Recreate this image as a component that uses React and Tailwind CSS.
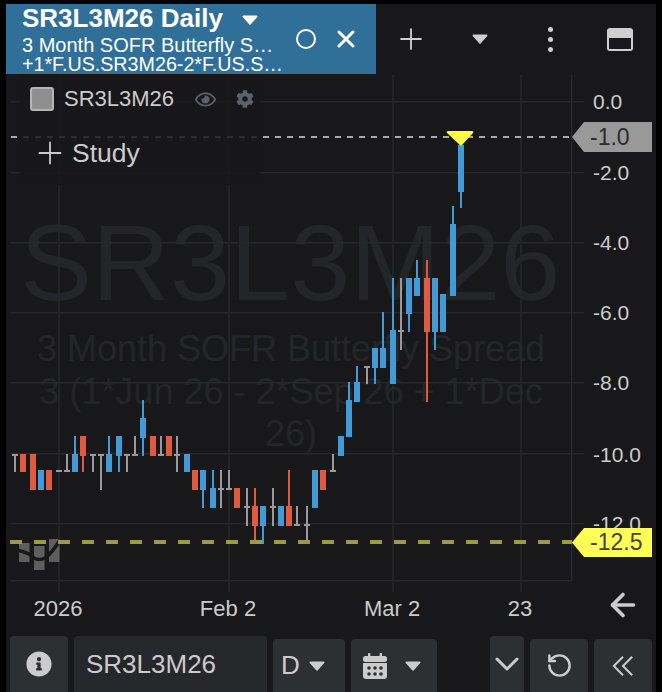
import React from "react";
import { ArrowLeft, ChevronDown, Plus, RotateCcw, X } from "lucide-react";
import { FaCog, FaInfoCircle, FaRegEye } from "react-icons/fa";

const BLUE = "#429ad6";
const RED = "#e05a3f";
const GREY = "#9a9a9a";

// x, wick top, wick bottom, body top, body bottom, color. Flat candles use a 2px body.
const candles = [
  [15, 454, 472, 454, 456, GREY],
  [23, 454, 472, 454, 472, RED],
  [33, 454, 490, 454, 490, RED],
  [41, 470, 490, 470, 490, BLUE],
  [49, 470, 490, 470, 490, RED],
  [59, 470, 472, 470, 472, GREY],
  [67, 454, 472, 470, 472, GREY],
  [75, 436, 472, 454, 472, BLUE],
  [83, 436, 472, 436, 456, RED],
  [93, 454, 472, 454, 456, GREY],
  [101, 454, 490, 454, 456, GREY],
  [109, 436, 472, 454, 472, BLUE],
  [119, 436, 472, 436, 456, BLUE],
  [127, 454, 472, 454, 456, GREY],
  [135, 436, 456, 454, 456, GREY],
  [143, 400, 456, 418, 438, BLUE],
  [153, 436, 456, 436, 456, RED],
  [161, 436, 456, 454, 456, GREY],
  [169, 436, 456, 436, 456, RED],
  [177, 436, 472, 454, 456, GREY],
  [187, 454, 472, 454, 472, BLUE],
  [195, 470, 490, 470, 490, RED],
  [203, 470, 508, 470, 490, BLUE],
  [213, 470, 508, 488, 508, BLUE],
  [221, 470, 508, 488, 490, GREY],
  [229, 470, 490, 488, 490, GREY],
  [237, 488, 508, 488, 508, RED],
  [247, 488, 526, 506, 508, GREY],
  [255, 488, 544, 506, 526, RED],
  [263, 506, 544, 506, 526, BLUE],
  [273, 488, 526, 506, 508, GREY],
  [281, 506, 526, 506, 526, BLUE],
  [289, 470, 526, 506, 526, RED],
  [297, 506, 526, 524, 526, GREY],
  [307, 506, 544, 524, 526, GREY],
  [315, 470, 508, 470, 508, BLUE],
  [323, 470, 490, 470, 490, RED],
  [333, 454, 472, 470, 472, GREY],
  [341, 436, 456, 436, 456, BLUE],
  [349, 382, 437, 400, 437, BLUE],
  [357, 366, 402, 382, 402, BLUE],
  [367, 366, 384, 366, 368, GREY],
  [375, 348, 384, 348, 368, BLUE],
  [383, 312, 368, 348, 368, BLUE],
  [393, 278, 384, 330, 384, BLUE],
  [401, 278, 350, 330, 332, GREY],
  [409, 278, 332, 278, 314, BLUE],
  [417, 260, 296, 278, 296, BLUE],
  [427, 260, 402, 278, 332, RED],
  [435, 278, 350, 278, 332, BLUE],
  [443, 294, 332, 294, 332, BLUE],
  [453, 206, 296, 224, 296, BLUE],
  [461, 145, 208, 145, 192, BLUE],
];

const gridY = [102, 173, 243, 313, 383, 454, 524];
const gridX = [59, 229, 393, 521];

const priceLabels = [
  ["0.0", 102, 593],
  ["-2.0", 173, 593],
  ["-4.0", 243, 593],
  ["-6.0", 313, 593],
  ["-8.0", 383, 593],
  ["-10.0", 455, 593],
  ["-12.0", 524, 593],
];

const dateLabels = [
  ["2026", 58],
  ["Feb 2", 228],
  ["Mar 2", 392],
  ["23", 520],
];

const Caret = ({ className }) => (
  <svg viewBox="0 0 16 10" className={className} fill="currentColor">
    <path d="M1.5 0.5h13a1 1 0 0 1 .8 1.6L8.8 9.2a1 1 0 0 1-1.6 0L.7 2.1A1 1 0 0 1 1.5.5z" />
  </svg>
);

const CalendarIcon = () => (
  <svg viewBox="0 0 24 26" className="h-[26px] w-[24px]" fill="currentColor">
    <rect x="5" y="0" width="2.4" height="5" rx="1" />
    <rect x="16.6" y="0" width="2.4" height="5" rx="1" />
    <rect x="0" y="3" width="24" height="6" rx="2.5" />
    <path d="M0 10h24v13a3 3 0 0 1-3 3H3a3 3 0 0 1-3-3z" />
    <g fill="#2e2f33">
      <circle cx="6" cy="15" r="1.8" />
      <circle cx="12" cy="15" r="1.8" />
      <circle cx="18" cy="15" r="1.8" />
      <circle cx="6" cy="21" r="1.8" />
      <circle cx="12" cy="21" r="1.8" />
      <circle cx="18" cy="21" r="1.8" />
    </g>
  </svg>
);

const Chart = () => (
  <svg viewBox="6 74 650 522" className="absolute inset-0 h-full w-full">
    {gridY.map((y) => (
      <rect key={y} x="11" y={y - 1} width="573" height="1.5" fill="#26272a" />
    ))}
    {gridX.map((x) => (
      <rect key={x} x={x - 0.75} y="75" width="1.5" height="517" fill="#26272a" />
    ))}
    <rect x="571" y="75" width="1.5" height="506" fill="#26272a" />
    <rect x="10" y="580" width="562" height="1.5" fill="#26272a" />

    {/* logo watermark */}
    <g fill="#5e5e5e">
      <rect x="19" y="543" width="10.5" height="19" />
      <rect x="34" y="546" width="10.5" height="24" />
      <rect x="49" y="539" width="10.5" height="23" />
    </g>
    <path d="M17 550Q30 553 34 558Q39 561 45 558Q52 553 60 540" stroke="#18181a" strokeWidth="3.5" fill="none" />

    {candles.map(([x, wt, wb, bt, bb, color]) => (
      <g key={x} fill={color}>
        <rect x={x - 1} y={wt} width="2" height={wb - wt} />
        <rect x={x - 3} y={bt} width="6" height={bb - bt} />
      </g>
    ))}

    <line x1="11" y1="137" x2="572" y2="137" stroke="#a8a8a8" strokeWidth="2" strokeDasharray="6 6" />
    <line x1="10" y1="542" x2="572" y2="542" stroke="#9c9c3e" strokeWidth="4" strokeDasharray="12 12" />
    <path d="M448 131h24q2 0 1 2l-11 12q-1 1-2 0l-13-12q-1-2 1-2z" fill="#ffff44" />
  </svg>
);

export default function App() {
  return (
    <div className="h-[692px] w-[662px] overflow-hidden bg-black pl-[6px] pr-[6px] pt-[4px] font-['Liberation_Sans',Arial,sans-serif] text-[#cbcbcb]">
      <div className="flex h-[688px] w-[650px] flex-col bg-[#18181a]">
        {/* top toolbar */}
        <div className="flex h-[70px] shrink-0">
          <div className="flex w-[370px] items-center overflow-hidden bg-[#2f6f98] pl-[16px] text-white">
            <div className="w-[268px] shrink-0">
              <div className="flex h-[31px] items-center">
                <span className="whitespace-nowrap pb-[3px] text-[26px] font-bold leading-none">SR3L3M26 Daily</span>
                <Caret className="ml-[19px] h-[10px] w-[16px]" />
              </div>
              <div className="h-[20px] whitespace-nowrap text-[20px] leading-[20px]">3 Month SOFR Butterfly S…</div>
              <div className="h-[19px] whitespace-nowrap text-[19.7px] leading-[19px]">+1*F.US.SR3M26-2*F.US.S…</div>
            </div>
            <div className="ml-[6px] h-[20px] w-[20px] shrink-0 rounded-full border-2 border-white" />
            <X className="ml-[16px] h-[28px] w-[28px] shrink-0" strokeWidth={2.6} />
          </div>
          <div className="flex flex-1 items-center text-[#cfcfcf]">
            <Plus className="ml-[18px] h-[34px] w-[34px] shrink-0" strokeWidth={1.3} />
            <Caret className="ml-[44px] h-[10px] w-[16px] shrink-0" />
            <div className="ml-[60px] flex flex-col gap-[5px]">
              <span className="h-[5px] w-[5px] rounded-full bg-[#cfcfcf]" />
              <span className="h-[5px] w-[5px] rounded-full bg-[#cfcfcf]" />
              <span className="h-[5px] w-[5px] rounded-full bg-[#cfcfcf]" />
            </div>
            <div className="ml-[54px] flex h-[23px] w-[26px] flex-col rounded-[3px] border-2 border-[#cfcfcf] bg-[#cfcfcf]">
              <div className="mt-[8px] flex-1 bg-[#18181a]" />
            </div>
          </div>
        </div>

        {/* chart */}
        <div className="relative h-[522px] shrink-0">
          <div className="absolute left-0 top-[146px] w-[570px] text-center text-[#242528]">
            <div className="absolute left-[14px] top-[-7px] whitespace-nowrap text-[108px] leading-[100px]">SR3L3M26</div>
            <div className="pt-[108px] text-[36px] leading-[42.5px]">
              3 Month SOFR Butterfly Spread
              <br />3 (1*Jun 26 - 2*Sep 26 + 1*Dec
              <br />26)
            </div>
          </div>

          <Chart />

          {/* legend dims the chart behind it */}
          <div className="absolute left-[14px] top-[1px] h-[110px] w-[240px] bg-[#18181a]/85" />

          <div className="absolute left-[24px] top-[13px] flex h-[24px] items-center">
            <div className="h-[24px] w-[24px] rounded-[3px] border-2 border-[#b5b5b5] bg-[#8f8f8f]" />
            <span className="ml-[10px] text-[22px] leading-none">SR3L3M26</span>
            <FaRegEye className="ml-[21px] h-[21px] w-[21px] text-[#5c606c]" />
            <FaCog className="ml-[20px] h-[18px] w-[18px] text-[#5c606c]" />
          </div>

          <div className="absolute left-[26px] top-[61px] flex items-center">
            <Plus className="h-[36px] w-[36px]" strokeWidth={1.2} />
            <span className="ml-[4px] text-[26.5px] leading-[36px]">Study</span>
          </div>

          {priceLabels.map(([label, y, x]) => (
            <span key={label} className="absolute text-[21px] leading-[24px]" style={{ top: y - 74 - 12, left: x - 6 }}>
              {label}
            </span>
          ))}

          <div className="absolute left-[566px] top-[48px] flex h-[30px] w-[80px] items-center bg-[#999999] pl-[18px] text-[23px] text-[#2b2b2b] [clip-path:polygon(12px_0,100%_0,100%_100%,12px_100%,0_50%)]">
            -1.0
          </div>
          <div className="absolute left-[566px] top-[454px] flex h-[29px] w-[80px] items-center bg-[#ffff55] pl-[18px] text-[23px] text-[#444444] [clip-path:polygon(12px_0,100%_0,100%_100%,12px_100%,0_50%)]">
            -12.5
          </div>
        </div>

        {/* date axis */}
        <div className="relative flex h-[40px] shrink-0">
          {dateLabels.map(([label, x]) => (
            <span key={label} className="absolute top-[1px] -translate-x-1/2 text-[22px] leading-[24px]" style={{ left: x - 6 }}>
              {label}
            </span>
          ))}
          <ArrowLeft className="absolute left-[599px] top-[-9px] h-[36px] w-[36px]" strokeWidth={2.4} />
        </div>

        {/* bottom controls */}
        <div className="flex h-[56px] shrink-0 items-end">
          <div className="ml-[4px] flex h-[56px] w-[58px] items-center justify-center rounded-t-[4px] bg-[#2e2f33]">
            <FaInfoCircle className="h-[26px] w-[26px]" />
          </div>
          <div className="ml-[6px] flex h-[56px] w-[193px] items-center rounded-t-[4px] bg-[#26272a] pl-[12px] text-[26px]">
            SR3L3M26
          </div>
          <div className="ml-[6px] flex h-[53px] w-[72px] items-center rounded-t-[4px] bg-[#2e2f33] pl-[8px] text-[26px]">
            D
            <Caret className="ml-[9px] h-[10px] w-[16px]" />
          </div>
          <div className="ml-[6px] flex h-[53px] w-[86px] items-center rounded-t-[4px] bg-[#2e2f33] pl-[12px]">
            <CalendarIcon />
            <Caret className="ml-[18px] h-[10px] w-[16px]" />
          </div>
          <div className="ml-[53px] flex h-[56px] w-[34px] items-center justify-center overflow-hidden rounded-t-[4px] bg-[#2e2f33]">
            <ChevronDown className="h-[40px] w-[40px] shrink-0" strokeWidth={1.8} />
          </div>
          <div className="ml-[6px] flex h-[53px] w-[58px] items-center justify-center rounded-t-[4px] bg-[#2e2f33]">
            <RotateCcw className="h-[27px] w-[27px]" strokeWidth={2.2} />
          </div>
          <div className="ml-[6px] flex h-[53px] w-[58px] items-center justify-center rounded-t-[4px] bg-[#2e2f33]">
            <svg viewBox="0 0 24 24" className="h-[22px] w-[22px]" fill="none" stroke="currentColor" strokeWidth="2.2">
              <path d="M12 2 L2 12 L12 22 M22 2 L12 12 L22 22" />
            </svg>
          </div>
        </div>
      </div>
    </div>
  );
}
